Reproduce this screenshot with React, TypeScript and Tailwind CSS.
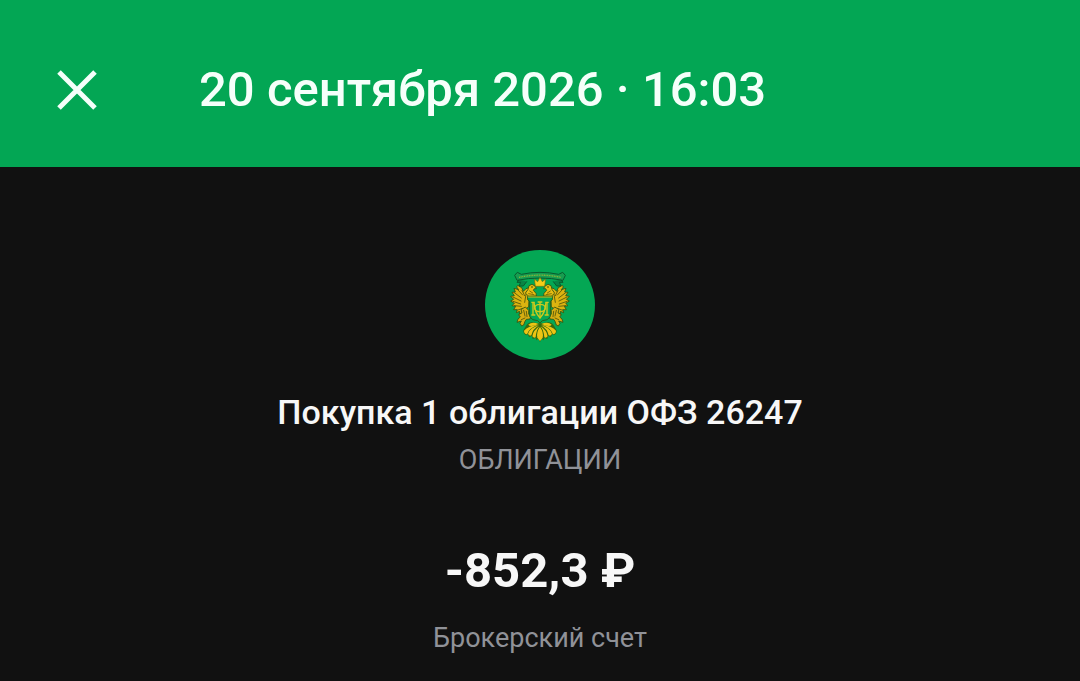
function CloseIcon() {
  return (
    <svg viewBox="0 0 48 48" className="size-12" aria-hidden="true">
      <path d="M6 6 42 42M42 6 6 42" fill="none" stroke="currentColor" strokeWidth="5" />
    </svg>
  );
}

// Left half of the eagle, the right one is its mirror
function EagleHalf() {
  return (
    <g strokeLinejoin="round" strokeLinecap="round">
      {/* wing */}
      <path
        d="M147 128 138 131 130 139 125 128 113 121 110 126 116 134 102 130 106 141 96 142 103 152 92 154 101 163 92 168 103 175 96 182 107 184 101 194 112 194 109 203 119 199 119 208 128 202 136 192 146 186 147 160Z"
        fill="#dcb310"
        stroke="#34500f"
        strokeWidth="2.5"
      />
      <path
        d="M113 134 128 150M103 143 124 159M99 156 123 168M99 169 122 177M103 182 124 184M114 195 128 190M126 136 134 152M138 148 134 172"
        fill="none"
        stroke="#4d520b"
        strokeWidth="2.5"
      />
      {/* head and neck */}
      <path
        d="M144 133 147 122 156 118 165 123 169 131 163 131 160 136 168 145 169 153 146 154 137 145Z"
        fill="#e7bd12"
        stroke="#34500f"
        strokeWidth="2.5"
      />
      <path d="M149 138 158 144M146 146 162 149" stroke="#665d08" strokeWidth="2.5" />
      <circle cx="156" cy="126" r="2.5" fill="#34420b" />
      {/* leg and claw */}
      <path
        d="M124 193 136 186 146 196 146 207 152 214 150 222 139 223 135 229 131 240 125 243 120 235 124 228 111 232 114 222 121 216 116 209 125 204Z"
        fill="#d6ad12"
        stroke="#34500f"
        strokeWidth="2.5"
      />
      <path d="M131 196 135 213M139 199 141 215M124 224 135 219" stroke="#4f540a" strokeWidth="2.5" />
      {/* tail feathers */}
      <path
        d="M170 235Q148 227 139 241L130 256Q130 269 141 271L143 266 147 276 156 273 158 282 167 279 169 286 175 281 180 291V235Z"
        fill="#34690f"
      />
      <g fill="#edc414">
        <path d="M176 237Q156 228 145 239 150 248 176 237Z" />
        <path d="M176 239Q144 242 132 257 132 267 141 268 146 249 176 239Z" />
        <path d="M177 241Q151 248 144 266 148 274 154 271 158 252 177 241Z" />
        <path d="M178 244Q159 257 157 274 162 281 167 277 168 258 178 244Z" />
        <path d="M180 246Q168 263 172 278L180 288Z" />
      </g>
      {/* ribbon end */}
      <path
        d="M118 103 111 112 122 112 117 123 130 123 140 110"
        fill="#088444"
        stroke="#075b2d"
        strokeWidth="3"
      />
    </g>
  );
}

function MinistryEmblem() {
  return (
    <svg viewBox="15 15 330 330" className="size-[110px]" role="img" aria-label="Облигации">
      <circle cx="180" cy="180" r="165" fill="#04a754" />
      <EagleHalf />
      <g transform="translate(360 0) scale(-1 1)">
        <EagleHalf />
      </g>
      <path
        d="M104 91 112 82 124 88Q180 76 236 88L248 82 256 91 249 106Q180 92 111 106Z"
        fill="#189d50"
        stroke="#075b2d"
        strokeWidth="3"
        strokeLinejoin="round"
      />
      <path d="M117 97Q180 84 243 97" fill="none" stroke="#91b536" strokeWidth="4" strokeDasharray="3 2" />
      <path
        d="M166 124 163 102 173 110 180 97 187 110 197 102 194 124Z"
        fill="#f6cd18"
        stroke="#6a7010"
        strokeWidth="2"
      />
      {/* shield */}
      <path
        d="M143 154H217V164L211 169V214L202 224 187 227 180 234 173 227 158 224 149 214V169L143 164Z"
        fill="#04a754"
        stroke="#26601b"
        strokeWidth="3"
        strokeLinejoin="round"
      />
      <path d="M144 156H216" stroke="#d8bd1b" strokeWidth="3" />
      {/* monogram */}
      <g fill="none" stroke="#cfca1c" strokeWidth="4">
        <path d="M154 172H164M159 172V210M154 210H166M196 172H206M201 172V210M194 210H206" />
        <path d="M162 172Q164 202 180 219 196 202 198 172" />
        <path d="M173 171H187M180 171V220" />
        <ellipse cx="180" cy="189" rx="16" ry="11" />
      </g>
    </svg>
  );
}

export default function App() {
  return (
    <div className="min-h-screen bg-[#111111] font-['Roboto',sans-serif] text-[#f7f7f7]">
      <header className="flex items-center gap-[98px] bg-[#03a654] px-[53px] pt-[60px] pb-[47px] text-[#f5fffa]">
        <button type="button" aria-label="Закрыть" className="shrink-0">
          <CloseIcon />
        </button>
        <h1 className="text-[49px] leading-[60px] font-medium">20 сентября 2026 · 16:03</h1>
      </header>
      <main className="flex flex-col items-center px-6 pt-[83px] pb-6 text-center">
        <MinistryEmblem />
        <h2 className="mt-8 text-[34px] leading-[40px] font-medium">Покупка 1 облигации ОФЗ 26247</h2>
        <p className="mt-3 text-[27px] leading-[32px] text-[#909298]">ОБЛИГАЦИИ</p>
        <p className="mt-[65px] text-[49px] leading-[60px] font-bold">-852,3 ₽</p>
        <p className="mt-[21px] text-[27px] leading-[32px] text-[#909298]">Брокерский счет</p>
      </main>
    </div>
  );
}
